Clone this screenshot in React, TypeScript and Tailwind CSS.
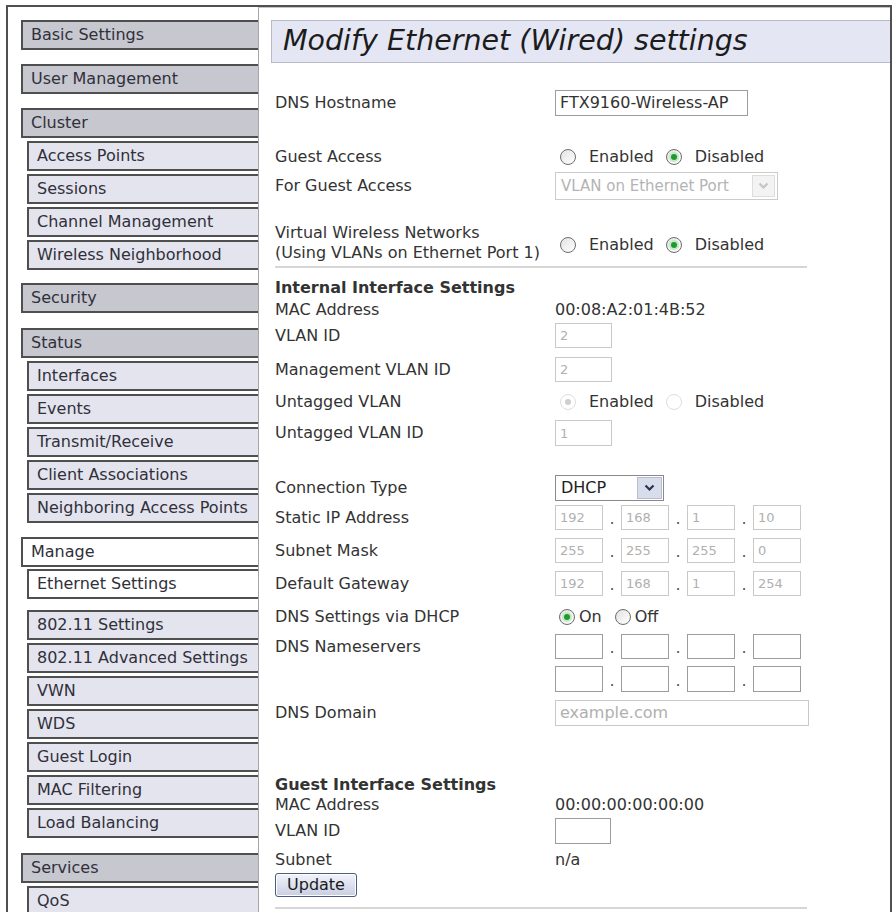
import React from 'react';

type NavItem = { label: string; sub?: boolean; mt: string; active?: boolean };

const nav: NavItem[] = [
  { label: 'Basic Settings', mt: 'mt-[13px]' },
  { label: 'User Management', mt: 'mt-[14px]' },
  { label: 'Cluster', mt: 'mt-[14px]' },
  { label: 'Access Points', sub: true, mt: 'mt-[3px]' },
  { label: 'Sessions', sub: true, mt: 'mt-[3px]' },
  { label: 'Channel Management', sub: true, mt: 'mt-[3px]' },
  { label: 'Wireless Neighborhood', sub: true, mt: 'mt-[3px]' },
  { label: 'Security', mt: 'mt-[13px]' },
  { label: 'Status', mt: 'mt-[15px]' },
  { label: 'Interfaces', sub: true, mt: 'mt-[3px]' },
  { label: 'Events', sub: true, mt: 'mt-[3px]' },
  { label: 'Transmit/Receive', sub: true, mt: 'mt-[3px]' },
  { label: 'Client Associations', sub: true, mt: 'mt-[3px]' },
  { label: 'Neighboring Access Points', sub: true, mt: 'mt-[3px]' },
  { label: 'Manage', mt: 'mt-[14px]', active: true },
  { label: 'Ethernet Settings', sub: true, mt: 'mt-[2px]', active: true },
  { label: '802.11 Settings', sub: true, mt: 'mt-[11px]' },
  { label: '802.11 Advanced Settings', sub: true, mt: 'mt-[3px]' },
  { label: 'VWN', sub: true, mt: 'mt-[3px]' },
  { label: 'WDS', sub: true, mt: 'mt-[3px]' },
  { label: 'Guest Login', sub: true, mt: 'mt-[3px]' },
  { label: 'MAC Filtering', sub: true, mt: 'mt-[3px]' },
  { label: 'Load Balancing', sub: true, mt: 'mt-[3px]' },
  { label: 'Services', mt: 'mt-[15px]' },
  { label: 'QoS', sub: true, mt: 'mt-[3px]' },
];

function NavBox({ item }: { item: NavItem }) {
  const bg = item.active ? 'bg-white' : item.sub ? 'bg-[#e4e4ee]' : 'bg-[#c7c7d0]';
  return (
    <div
      className={`${item.mt} ${item.sub ? 'ml-[6px]' : ''} ${bg} flex h-[30px] shrink-0 items-center whitespace-nowrap border-2 border-r-0 border-[#4f4f4f] pl-[8px] text-[16px] leading-none text-[#30303a]`}
    >
      {item.label}
    </div>
  );
}

function Radio({ checked, disabled }: { checked?: boolean; disabled?: boolean }) {
  return (
    <span
      className={`inline-flex h-[16px] w-[16px] shrink-0 items-center justify-center rounded-full border ${
        disabled ? 'border-[#dedede] bg-white' : 'border-[#6c6c6c] bg-gradient-to-br from-[#e2e2e2] to-white'
      }`}
    >
      {checked && (
        <span
          className={`h-[6px] w-[6px] rounded-full ${
            disabled ? 'bg-[#cfcfcf]' : 'bg-[#1f9a2b] shadow-[0_0_0_2px_#c4e8c6]'
          }`}
        />
      )}
    </span>
  );
}

function Chevron({ color }: { color: string }) {
  return (
    <svg width="11" height="8" viewBox="0 0 11 8">
      <path d="M1.5 1.5 L5.5 5.5 L9.5 1.5" fill="none" stroke={color} strokeWidth="2.2" />
    </svg>
  );
}

function Field({
  w,
  h,
  children,
  disabled,
  small,
}: {
  w: string;
  h: string;
  children?: React.ReactNode;
  disabled?: boolean;
  small?: boolean;
}) {
  return (
    <div
      className={`${w} ${h} flex shrink-0 items-center border bg-white pl-[4px] ${
        disabled ? 'border-[#c9c9c9] text-[#b0b0b0]' : 'border-[#9c9c9c] text-[#333]'
      } ${small ? 'text-[13px]' : 'text-[16px]'} leading-none`}
    >
      {children}
    </div>
  );
}

function IpRow({ values, disabled }: { values: string[]; disabled?: boolean }) {
  return (
    <div className="flex h-full items-stretch">
      {values.map((v, i) => (
        <React.Fragment key={i}>
          {i > 0 && (
            <span className="flex w-[18px] items-end justify-center pb-[3px] text-[16px] leading-none text-[#555]">.</span>
          )}
          <Field w="w-[48px]" h="h-full" disabled={disabled} small>
            {v}
          </Field>
        </React.Fragment>
      ))}
    </div>
  );
}

function Row({
  mt,
  h,
  label,
  children,
  bold,
}: {
  mt: string;
  h: string;
  label?: React.ReactNode;
  children?: React.ReactNode;
  bold?: boolean;
}) {
  return (
    <div className={`${mt} ${h} flex shrink-0 items-center`}>
      <div className={`w-[280px] shrink-0 text-[16px] leading-[20px] text-[#333] ${bold ? 'font-bold text-[#222]' : ''}`}>
        {label}
      </div>
      <div className="flex h-full items-center text-[16px] leading-none text-[#333]">{children}</div>
    </div>
  );
}

export default function App() {
  return (
    <div className="h-[912px] w-[893px] overflow-hidden bg-white font-['DejaVu_Sans',sans-serif]">
      <div className="ml-[6px] mt-[5px] flex h-[907px] w-[886px] border-l-2 border-r-2 border-t-2 border-[#505050]">
        {/* Sidebar */}
        <div className="flex w-[250px] shrink-0 flex-col pl-[13px]">
          {nav.map((item) => (
            <NavBox key={item.label} item={item} />
          ))}
        </div>

        {/* Content panel */}
        <div className="flex flex-1 flex-col border-l border-t border-l-[#a6a6a6] border-t-[#c4c4c4]">
          <div className="ml-[12px] mt-[12px] flex h-[43px] shrink-0 items-center border border-r-0 border-[#b6bacb] bg-[#e4e6f4] pl-[11px]">
            <span className="text-[28.5px] italic leading-none text-[#1c1c1c]">Modify Ethernet (Wired) settings</span>
          </div>

          <div className="flex flex-col pl-[16px]">
            <Row mt="mt-[27px]" h="h-[26px]" label="DNS Hostname">
              <Field w="w-[193px]" h="h-[26px]">FTX9160-Wireless-AP</Field>
            </Row>

            <Row mt="mt-[30px]" h="h-[22px]" label="Guest Access">
              <span className="ml-[5px] flex items-center">
                <Radio />
              </span>
              <span className="ml-[13px]">Enabled</span>
              <span className="ml-[12px] flex items-center">
                <Radio checked />
              </span>
              <span className="ml-[13px]">Disabled</span>
            </Row>

            <Row mt="mt-[4px]" h="h-[28px]" label="For Guest Access">
              <div className="flex h-[28px] w-[223px] items-stretch border border-[#cccccc] bg-white">
                <span className="flex flex-1 items-center pl-[5px] text-[15px] text-[#b4b4b4]">VLAN on Ethernet Port</span>
                <span className="my-[2px] mr-[2px] flex w-[23px] items-center justify-center border border-[#dddddd] bg-[#f3f3f3]">
                  <Chevron color="#c4c4c4" />
                </span>
              </div>
            </Row>

            <Row
              mt="mt-[23px]"
              h="h-[40px]"
              label={
                <>
                  <div>Virtual Wireless Networks</div>
                  <div>(Using VLANs on Ethernet Port 1)</div>
                </>
              }
            >
              <div className="mt-[4px] flex items-center">
                <span className="ml-[5px] flex items-center">
                  <Radio />
                </span>
                <span className="ml-[13px]">Enabled</span>
                <span className="ml-[12px] flex items-center">
                  <Radio checked />
                </span>
                <span className="ml-[13px]">Disabled</span>
              </div>
            </Row>

            <div className="mt-[3px] h-[2px] w-[532px] shrink-0 bg-[#d6d6d6]" />

            <Row mt="mt-[10px]" h="h-[20px]" label="Internal Interface Settings" bold />
            <Row mt="mt-[2px]" h="h-[20px]" label="MAC Address">
              00:08:A2:01:4B:52
            </Row>
            <Row mt="mt-[3px]" h="h-[25px]" label="VLAN ID">
              <Field w="w-[57px]" h="h-[25px]" disabled small>
                2
              </Field>
            </Row>
            <Row mt="mt-[9px]" h="h-[25px]" label="Management VLAN ID">
              <Field w="w-[57px]" h="h-[25px]" disabled small>
                2
              </Field>
            </Row>
            <Row mt="mt-[9px]" h="h-[22px]" label="Untagged VLAN">
              <span className="ml-[5px] flex items-center">
                <Radio checked disabled />
              </span>
              <span className="ml-[13px]">Enabled</span>
              <span className="ml-[12px] flex items-center">
                <Radio disabled />
              </span>
              <span className="ml-[13px]">Disabled</span>
            </Row>
            <Row mt="mt-[7px]" h="h-[26px]" label="Untagged VLAN ID">
              <Field w="w-[57px]" h="h-[26px]" disabled small>
                1
              </Field>
            </Row>

            <Row mt="mt-[29px]" h="h-[26px]" label="Connection Type">
              <div className="flex h-[26px] w-[109px] items-stretch border border-[#8a8a8a] bg-white">
                <span className="flex flex-1 items-center pl-[5px] text-[16px] text-[#222]">DHCP</span>
                <span className="my-[1px] mr-[1px] flex w-[25px] items-center justify-center border border-[#b8bccc] bg-[#d9dcea]">
                  <Chevron color="#2a3350" />
                </span>
              </div>
            </Row>
            <Row mt="mt-[4px]" h="h-[25px]" label="Static IP Address">
              <IpRow values={['192', '168', '1', '10']} disabled />
            </Row>
            <Row mt="mt-[8px]" h="h-[25px]" label="Subnet Mask">
              <IpRow values={['255', '255', '255', '0']} disabled />
            </Row>
            <Row mt="mt-[8px]" h="h-[25px]" label="Default Gateway">
              <IpRow values={['192', '168', '1', '254']} disabled />
            </Row>
            <Row mt="mt-[10px]" h="h-[22px]" label="DNS Settings via DHCP">
              <span className="ml-[4px] flex items-center">
                <Radio checked />
              </span>
              <span className="ml-[4px]">On</span>
              <span className="ml-[13px] flex items-center">
                <Radio />
              </span>
              <span className="ml-[4px]">Off</span>
            </Row>
            <Row mt="mt-[6px]" h="h-[25px]" label="DNS Nameservers">
              <IpRow values={['', '', '', '']} />
            </Row>
            <Row mt="mt-[7px]" h="h-[26px]">
              <IpRow values={['', '', '', '']} />
            </Row>
            <Row mt="mt-[8px]" h="h-[26px]" label="DNS Domain">
              <Field w="w-[254px]" h="h-[26px]" disabled>
                example.com
              </Field>
            </Row>

            <Row mt="mt-[49px]" h="h-[20px]" label="Guest Interface Settings" bold />
            <Row mt="mt-[0px]" h="h-[20px]" label="MAC Address">
              00:00:00:00:00:00
            </Row>
            <Row mt="mt-[3px]" h="h-[26px]" label="VLAN ID">
              <Field w="w-[56px]" h="h-[26px]" />
            </Row>
            <Row mt="mt-[6px]" h="h-[20px]" label="Subnet">
              n/a
            </Row>
            <div className="mt-[3px] flex h-[24px] w-[82px] shrink-0 items-center justify-center rounded-[3px] border border-[#4a5b80] bg-gradient-to-b from-[#f2f4fb] to-[#c8cee3] text-[16px] leading-none text-[#1a1a1a] shadow-[inset_0_0_0_1px_#ffffff]">
              Update
            </div>
            <div className="mt-[10px] h-[2px] w-[532px] shrink-0 bg-[#d6d6d6]" />
          </div>
        </div>
      </div>
    </div>
  );
}
